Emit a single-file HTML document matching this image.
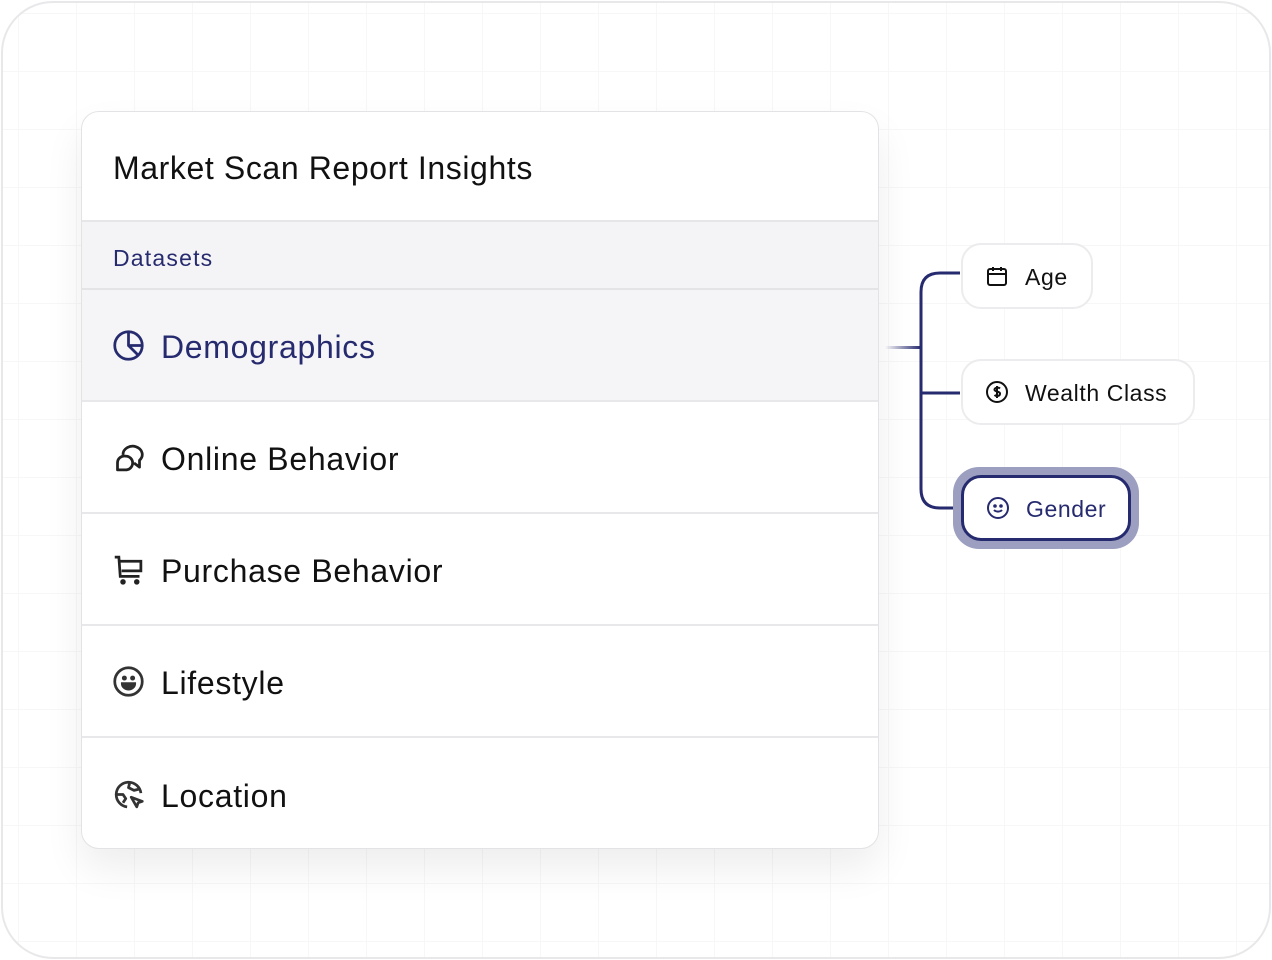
<!DOCTYPE html>
<html><head><style>
*{box-sizing:border-box;margin:0;padding:0}
body{width:1272px;height:960px;background:#fff;font-family:"Liberation Sans",sans-serif;position:relative;overflow:hidden}
.frame{position:absolute;left:1px;top:1px;width:1270px;height:958px;border:2px solid #e8e8ea;border-radius:52px;background-color:#fff;
background-image:linear-gradient(#f7f7f8 1px,transparent 1px),linear-gradient(90deg,#f7f7f8 1px,transparent 1px);background-size:58px 58px;background-position:15px 10px}
.card{position:absolute;left:81px;top:111px;width:798px;height:738px;border:1.5px solid #e3e3e6;border-radius:18px;background:#fff;box-shadow:0 20px 40px rgba(0,0,0,0.07);overflow:hidden}
.title{height:110px;border-bottom:2px solid #e6e6e9;padding-left:31px;font-size:32px;line-height:112px;color:#111;letter-spacing:0.6px}
.ds{height:68px;background:#f4f4f6;border-bottom:2px solid #e4e4e7;padding-left:31px;font-size:23px;line-height:72px;color:#262a6e;letter-spacing:1.2px}
.row{height:112px;border-bottom:2px solid #e8e8ea;display:flex;align-items:center;padding-left:30px;padding-top:4px;font-size:32px;color:#111;letter-spacing:0.7px}
.row:last-child{border-bottom:none}
.row svg{width:33px;height:33px;margin-right:16px;margin-top:-4px}
.row.act{background:#f5f5f7;color:#262a6e}
.chip{position:absolute;height:66px;border:2px solid #ececee;border-radius:20px;background:#fff;display:flex;align-items:center;padding-left:22px;padding-top:3px;font-size:23px;color:#111;letter-spacing:0.6px}
.chip svg{width:24px;height:24px;margin-right:16px;margin-top:-3px}
</style></head><body>
<div class="frame"></div>
<svg style="position:absolute;left:0;top:0" width="1272" height="960">
<defs><linearGradient id="g" x1="0" x2="1"><stop offset="0" stop-color="#262a6e" stop-opacity="0"/><stop offset="1" stop-color="#262a6e"/></linearGradient></defs>
<rect x="885" y="346" width="36" height="3" fill="url(#g)"/>
<path d="M960 273 H940 Q921 273 921 292 V489 Q921 508 940 508 H960 M921 393 H960" fill="none" stroke="#262a6e" stroke-width="3"/>
</svg>
<div class="card">
<div class="title">Market Scan Report Insights</div>
<div class="ds">Datasets</div>
<div class="row act"><svg viewBox="0 0 24 24" fill="none" stroke="#262a6e" stroke-width="2"><circle cx="12" cy="12" r="10"/><path d="M12 2v10l7 7M12 12h10"/></svg>Demographics</div>
<div class="row"><svg viewBox="0 0 24 24" fill="none" stroke="#222" stroke-width="2" stroke-linejoin="round"><path d="M8 10a7 6 0 1 1 12 4v5l-4-3M10 11a5 5 0 0 0-6 5v5h6a5 5 0 0 0 0-10z"/></svg>Online Behavior</div>
<div class="row"><svg viewBox="0 0 24 24" fill="none" stroke="#222" stroke-width="2"><path d="M2 3h3l1 14h14M6 6h15v7H7"/><circle cx="8" cy="21" r="1" fill="#222"/><circle cx="18" cy="21" r="1" fill="#222"/></svg>Purchase Behavior</div>
<div class="row"><svg viewBox="0 0 24 24" fill="none" stroke="#333" stroke-width="2"><circle cx="12" cy="12" r="10"/><circle cx="9" cy="9.5" r="0.8" fill="#333"/><circle cx="15" cy="9.5" r="0.8" fill="#333"/><path d="M7.5 13.5h9a4.5 4 0 0 1-9 0z" fill="#333"/></svg>Lifestyle</div>
<div class="row"><svg viewBox="0 0 24 24" fill="none" stroke="#333" stroke-width="2" stroke-linejoin="round"><path d="M21 11a9 9 0 1 0-10 10"/><path d="M3 12h5l2 3-2 3M13 3l-1 4 4 2 4-1"/><path d="M14 14l8 3-3 1-1 3z"/></svg>Location</div>
</div>
<div class="chip" style="left:961px;top:243px;width:132px"><svg viewBox="0 0 24 24" fill="none" stroke="#111" stroke-width="2"><rect x="3" y="5" width="18" height="16" rx="2"/><path d="M3 10h18M8 3v4M16 3v4"/></svg>Age</div>
<div class="chip" style="left:961px;top:359px;width:234px"><svg viewBox="0 0 24 24" fill="none" stroke="#111" stroke-width="2"><circle cx="12" cy="12" r="10"/><path d="M15 8.5c-1-1-5-1.5-5.5 1s6 1.5 5.5 4.5-4.5 2-5.5 1M12 6v12"/></svg>Wealth Class</div>
<div style="position:absolute;left:953px;top:467px;width:186px;height:82px;border-radius:26px;background:#9c9fc0"></div>
<div class="chip" style="left:961px;top:475px;width:170px;border:3px solid #262a6e;color:#262a6e;border-radius:20px"><svg viewBox="0 0 24 24" fill="none" stroke="#262a6e" stroke-width="2"><circle cx="12" cy="12" r="10"/><circle cx="9" cy="10" r="0.8" fill="#262a6e"/><circle cx="15" cy="10" r="0.8" fill="#262a6e"/><path d="M8 14a5 4 0 0 0 8 0"/></svg>Gender</div>
</body></html>
